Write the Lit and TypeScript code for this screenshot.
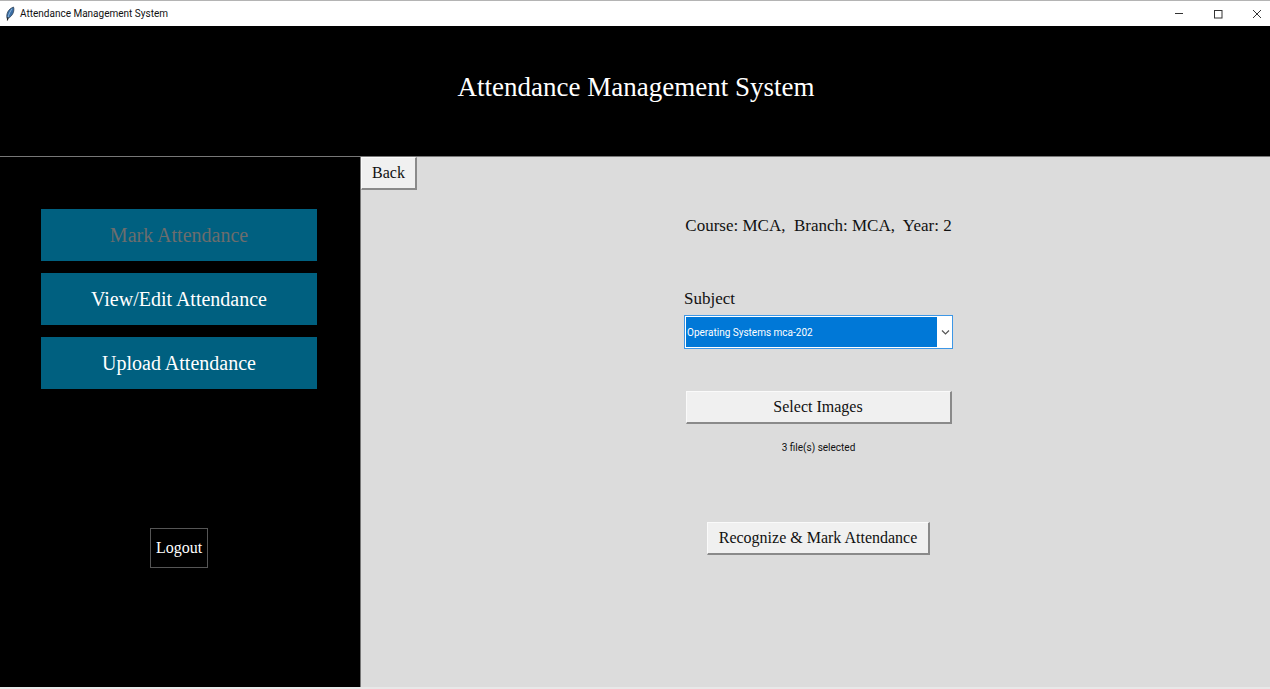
import { LitElement, html, css, svg } from "lit";
import { customElement, property, state } from "lit/decorators.js";

@customElement("title-bar")
class TitleBar extends LitElement {
  @property() label = "";

  static styles = css`
    :host {
      display: flex;
      align-items: center;
      height: 26px;
      box-sizing: border-box;
      border-top: 1px solid #b4b4b4;
      background: #fff;
      color: #111;
      font: 10px/14px Roboto, "Open Sans", sans-serif;
    }
    .feather {
      width: 12px;
      height: 16px;
      margin: 0 4px;
    }
    .label {
      flex: 1;
    }
    .controls {
      display: flex;
      margin-right: -6px;
      overflow: hidden;
    }
    .control {
      display: grid;
      place-items: center;
      width: 39px;
      height: 25px;
      padding: 0;
      border: 0;
      background: none;
    }
    .control svg {
      width: 10px;
      height: 10px;
      fill: none;
      stroke: #333;
    }
  `;

  render() {
    const controls = [
      { name: "Minimize", shape: svg`<path d="M1 4.500h8" />` },
      { name: "Maximize", shape: svg`<rect x="1.500" y="1.500" width="7.500" height="7.500" />` },
      { name: "Close", shape: svg`<path d="M1 1l8 8M9 1L1 9" />` },
    ];
    return html`
      <svg class="feather" viewBox="0 0 12 16" aria-hidden="true">
        <path d="M3 12.500C2 8 4 3 9.500 1c1 2 .2 6-1.500 8s-3 3.500-5 3.500z" fill="#3a6ea5" stroke="#26384a" stroke-width=".7" />
        <path d="M8 3C6 5.500 4.800 8 4 12" fill="none" stroke="#8fb6dc" stroke-width="1" />
        <path d="M4 11l-.6 3.500" fill="none" stroke="#222" stroke-width="1.200" />
      </svg>
      <span class="label">${this.label}</span>
      <div class="controls">
        ${controls.map(
          (c) => html`<button class="control" aria-label=${c.name}><svg viewBox="0 0 10 10">${c.shape}</svg></button>`
        )}
      </div>
    `;
  }
}

@customElement("side-menu")
class SideMenu extends LitElement {
  @state() private active = "Mark Attendance";

  static styles = css`
    :host {
      display: flex;
      flex-direction: column;
      align-items: center;
      box-sizing: border-box;
      padding: 52px 43px 24px 41px;
      background: #000;
      border-right: 1px solid #777;
    }
    nav {
      display: grid;
      gap: 12px;
      width: 100%;
      margin-bottom: 139px;
    }
    button {
      font-family: "Liberation Serif", "Times New Roman", serif;
      color: #fff;
    }
    .item {
      height: 52px;
      border: 0;
      background: #006080;
      font-size: 20px;
    }
    .item:disabled {
      color: #6d6d6d;
    }
    .logout {
      height: 40px;
      padding: 0 5px;
      border: 1px solid #555;
      background: #000;
      font-size: 16px;
    }
  `;

  render() {
    return html`
      <nav>
        ${["Mark Attendance", "View/Edit Attendance", "Upload Attendance"].map(
          (item) => html`<button class="item" ?disabled=${item === this.active} @click=${() => (this.active = item)}>${item}</button>`
        )}
      </nav>
      <button class="logout">Logout</button>
    `;
  }
}

@customElement("mark-attendance")
class MarkAttendance extends LitElement {
  static styles = css`
    :host {
      display: block;
      background: #dcdcdc;
      color: #111;
      font: 17px/20px "Liberation Serif", "Times New Roman", serif;
    }
    .raised {
      display: block;
      height: 33px;
      padding: 0 11px;
      border: solid;
      border-width: 1px 2px 2px 1px;
      border-color: #fafafa #8a8a8a #8a8a8a #fafafa;
      background: #f0f0f0;
      color: #111;
      font: inherit;
      font-size: 16px;
    }
    .back {
      padding: 0 10px;
    }
    .form {
      display: flex;
      flex-direction: column;
      align-items: center;
      padding-left: 6px;
    }
    .summary {
      margin: 26px 0 53px;
      white-space: pre;
    }
    .field {
      width: 269px;
      margin-bottom: 42px;
    }
    .field label {
      display: block;
      margin-bottom: 6px;
    }
    .combo {
      position: relative;
    }
    select {
      display: block;
      appearance: none;
      width: 100%;
      height: 34px;
      padding: 0 18px 0 2px;
      border: 1px solid #3d97e6;
      border-radius: 0;
      background: linear-gradient(#0078d7, #0078d7) 1px 1px / calc(100% - 16px) calc(100% - 2px) no-repeat #fff;
      color: #fff;
      font: 10px Roboto, "Open Sans", sans-serif;
    }
    .arrow {
      position: absolute;
      right: 3px;
      top: 13px;
      width: 9px;
      height: 9px;
      pointer-events: none;
    }
    .wide {
      width: 266px;
    }
    .files {
      margin: 14px 0 64px;
      font: 10px/20px Roboto, "Open Sans", sans-serif;
    }
  `;

  render() {
    return html`
      <button class="raised back">Back</button>
      <div class="form">
        <p class="summary">Course: MCA,  Branch: MCA,  Year: 2</p>
        <div class="field">
          <label for="subject">Subject</label>
          <div class="combo">
            <select id="subject">
              <option>Operating Systems mca-202</option>
            </select>
            <svg class="arrow" viewBox="0 0 9 9" aria-hidden="true">
              <path d="M1 2.500l3.500 3.500 3.500-3.500" fill="none" stroke="#555" stroke-width="1.200" />
            </svg>
          </div>
        </div>
        <button class="raised wide">Select Images</button>
        <p class="files">3 file(s) selected</p>
        <button class="raised">Recognize &amp; Mark Attendance</button>
      </div>
    `;
  }
}

@customElement("app-root")
class AppRoot extends LitElement {
  static styles = css`
    :host {
      display: flex;
      flex-direction: column;
      min-height: 100vh;
      overflow: hidden;
      background: #e8e8e8;
    }
    header {
      display: grid;
      place-items: center;
      height: 131px;
      box-sizing: border-box;
      padding: 0 0 8px 2px;
      background: #000;
      border-bottom: 1px solid #777;
    }
    h1 {
      margin: 0;
      color: #fff;
      font: 27px/32px "Liberation Serif", "Times New Roman", serif;
    }
    main {
      flex: 1;
      display: grid;
      grid-template-columns: 361px 1fr;
      margin-bottom: 2px;
    }
  `;

  render() {
    return html`
      <title-bar label="Attendance Management System"></title-bar>
      <header><h1>Attendance Management System</h1></header>
      <main>
        <side-menu></side-menu>
        <mark-attendance></mark-attendance>
      </main>
    `;
  }
}
